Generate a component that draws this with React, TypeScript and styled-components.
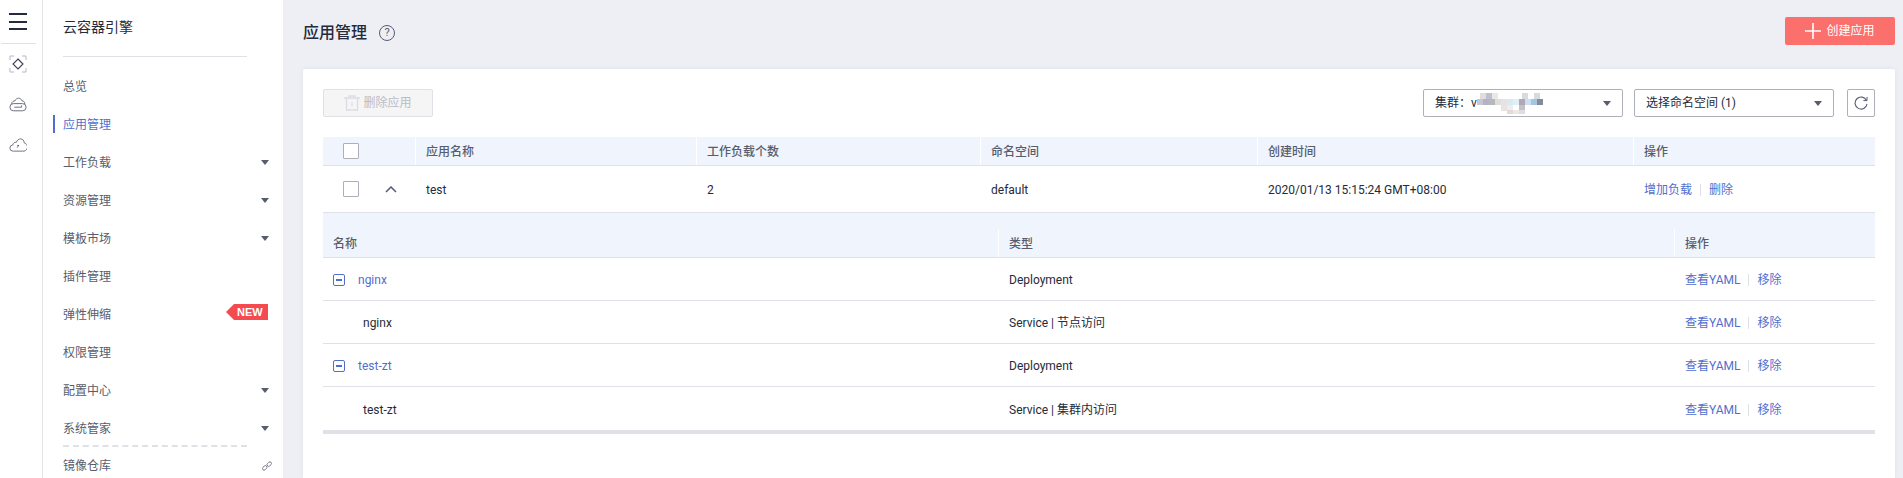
import React from 'react';
import styled, { createGlobalStyle } from 'styled-components';

const GlobalStyle = createGlobalStyle`
  html, body {
    margin: 0;
    height: 100%;
    overflow: hidden;
    background: #eeeff4;
  }
  #root {
    height: 100%;
  }
  * {
    box-sizing: border-box;
  }
`;

const navItems = [
  { label: '总览' },
  { label: '应用管理', active: true },
  { label: '工作负载', arrow: true },
  { label: '资源管理', arrow: true },
  { label: '模板市场', arrow: true },
  { label: '插件管理' },
  { label: '弹性伸缩', badge: true },
  { label: '权限管理' },
  { label: '配置中心', arrow: true },
  { label: '系统管家', arrow: true },
];

const workloads = [
  { name: 'nginx', type: 'Deployment', parent: true },
  { name: 'nginx', type: 'Service | 节点访问' },
  { name: 'test-zt', type: 'Deployment', parent: true },
  { name: 'test-zt', type: 'Service | 集群内访问' },
];

const mosaic: [number, number, number, number, string][] = [
  [5, 0, 6, 6, '#e0dce0'], [11, 0, 6, 6, '#bfbfd0'], [17, 0, 6, 6, '#e8e8e8'],
  [47, 0, 6, 6, '#d6dbe2'], [59, 0, 6, 6, '#d6dbe2'],
  [2, 6, 6, 6, '#c8c6d2'], [8, 6, 6, 6, '#b4b2c4'], [14, 6, 6, 6, '#b4babc'], [20, 6, 6, 6, '#dedede'],
  [26, 6, 6, 6, '#e8e2e2'], [32, 6, 6, 6, '#d8ebf4'], [38, 6, 6, 6, '#e0eef6'], [44, 6, 6, 6, '#aea8b8'],
  [50, 6, 6, 6, '#cbdff0'], [56, 6, 6, 6, '#a4c6e0'], [62, 6, 6, 6, '#868b9c'],
  [26, 12, 6, 6, '#e8e4e4'], [32, 12, 6, 6, '#ededed'], [44, 12, 6, 6, '#c4c0c8'],
  [32, 17, 6, 4, '#e2dad8'], [38, 17, 6, 4, '#ece8e8'], [44, 17, 6, 4, '#e0dce0'],
];

const App: React.FC = () => (
  <Page>
    <GlobalStyle />
    <Rail>
      <MenuBars>
        <span />
        <span />
        <span />
      </MenuBars>
      <RailDivider />
      <RailIcon>
        <svg width="18" height="18" viewBox="0 0 18 18" fill="none">
          <path d="M1 5V1h4M13 1h4v4M17 13v4h-4M5 17H1v-4" stroke="#b5b7c6" />
          <path d="M9 4l5 5-5 5-5-5z" stroke="#3b3f55" strokeWidth="1.1" />
        </svg>
      </RailIcon>
      <RailIcon>
        <svg width="18" height="15" viewBox="0 0 20 16" fill="none" stroke="#5f6274">
          <path d="M3 7.5C3 4.5 5.5 4 6.5 4 7.5 2 9 1 10.5 1c2 0 3.500 1.300 4 3 2 0 3 1.500 3 3.500" />
          <rect x="1" y="7" width="18" height="8" rx="4" />
          <path d="M6 11h8M14 9v2" />
        </svg>
      </RailIcon>
      <RailIcon>
        <svg width="18" height="14" viewBox="0 0 20 16" fill="none" stroke="#5f6274">
          <path d="M5 15H4.500a3.500 3.500 0 0 1-.5-7C4.500 5.500 6.500 4.500 8 5 9 2.500 11 1 13 1c2.500 0 4 2 4 4.500a4.700 4.700 0 0 1-2 9.500z" />
          <path d="M9 11l2-3M9 8.500h2" />
        </svg>
      </RailIcon>
    </Rail>

    <Sidebar>
      <ServiceTitle>云容器引擎</ServiceTitle>
      <SideDivider />
      <NavList>
        {navItems.map((item) => (
          <NavItem key={item.label} $active={item.active}>
            {item.label}
            {item.arrow && <NavArrow />}
            {item.badge && <NewBadge>NEW</NewBadge>}
          </NavItem>
        ))}
      </NavList>
      <DashedDivider />
      <RepoItem>
        镜像仓库
        <svg width="10" height="10" viewBox="0 0 10 10" fill="none" stroke="#6c6f80" strokeWidth="0.9">
          <rect x="0.200" y="5.300" width="5" height="3.200" rx="1.600" transform="rotate(-45 2.700 6.900)" />
          <rect x="4.800" y="1.500" width="5" height="3.200" rx="1.600" transform="rotate(-45 7.300 3.100)" />
        </svg>
      </RepoItem>
    </Sidebar>

    <Content>
      <TitleBar>
        <TitleGroup>
          <PageTitle>应用管理</PageTitle>
          <HelpIcon>?</HelpIcon>
        </TitleGroup>
        <CreateButton>
          <svg width="16" height="16" viewBox="0 0 16 16" stroke="#fff" strokeWidth="1.600">
            <path d="M8 0v16M0 8h16" />
          </svg>
          创建应用
        </CreateButton>
      </TitleBar>

      <Card>
        <Toolbar>
          <DeleteButton disabled>
            <svg width="16" height="16" viewBox="0 0 16 16" fill="none" stroke="#dcdde3" strokeWidth="1.300">
              <path d="M0 3h16M5 3V1h6v2M2.500 3v12h11V3M8 7v4" />
            </svg>
            删除应用
          </DeleteButton>
          <ToolbarRight>
            <SelectBox>
              <ClusterValue>
                集群：v
                <svg width="68" height="21" viewBox="0 0 68 21">
                  {mosaic.map(([x, y, w, h, fill]) => (
                    <rect key={`${x}-${y}`} x={x} y={y} width={w} height={h} fill={fill} />
                  ))}
                </svg>
              </ClusterValue>
              <SelectArrow />
            </SelectBox>
            <SelectBox>
              选择命名空间 (1)
              <SelectArrow />
            </SelectBox>
            <RefreshButton>
              <svg width="14" height="14" viewBox="0 0 14 14" fill="none" stroke="#555a70" strokeWidth="1.100">
                <path d="M12.500 4.500A6 6 0 1 0 13 8" />
                <path d="M13 1v3.600H9.400" strokeWidth="1" />
              </svg>
            </RefreshButton>
          </ToolbarRight>
        </Toolbar>

        <TableHead>
          <HeadCheckCell>
            <Checkbox />
          </HeadCheckCell>
          <HeadCell>应用名称</HeadCell>
          <HeadCell>工作负载个数</HeadCell>
          <HeadCell>命名空间</HeadCell>
          <HeadCell>创建时间</HeadCell>
          <HeadCell>操作</HeadCell>
        </TableHead>
        <AppRow>
          <ExpandCell>
            <Checkbox />
            <svg width="12" height="7" viewBox="0 0 12 7" fill="none" stroke="#555a70" strokeWidth="1.500">
              <path d="M1 6l5-5 5 5" />
            </svg>
          </ExpandCell>
          <Cell>test</Cell>
          <Cell>2</Cell>
          <Cell>default</Cell>
          <Cell>2020/01/13 15:15:24 GMT+08:00</Cell>
          <Cell>
            <LinkText>增加负载</LinkText>
            <LinkDivider />
            <LinkText>删除</LinkText>
          </Cell>
        </AppRow>

        <SubHead>
          <SubHeadCell>名称</SubHeadCell>
          <SubHeadCell>类型</SubHeadCell>
          <SubHeadCell>操作</SubHeadCell>
        </SubHead>
        {workloads.map((row, index) => (
          <SubRow key={index}>
            {row.parent ? (
              <NameCell>
                <CollapseBox />
                <LinkText>{row.name}</LinkText>
              </NameCell>
            ) : (
              <ChildName>{row.name}</ChildName>
            )}
            <Cell>{row.type}</Cell>
            <Cell>
              <LinkText>查看YAML</LinkText>
              <LinkDivider />
              <LinkText>移除</LinkText>
            </Cell>
          </SubRow>
        ))}
        <TableFoot />
      </Card>
    </Content>
  </Page>
);

export default App;

const Page = styled.div`
  display: flex;
  height: 478px;
  overflow: hidden;
  background: #eeeff4;
  color: #252b3a;
  font-family: Roboto, 'Noto Sans CJK SC', sans-serif;
  font-size: 12px;
  line-height: 16px;
`;

const Rail = styled.div`
  flex: 0 0 43px;
  background: #fff;
  border-right: 1px solid #e3e4e8;
`;

const MenuBars = styled.div`
  display: flex;
  flex-direction: column;
  justify-content: space-between;
  width: 18px;
  height: 17px;
  margin: 13px 0 13px 9px;

  span {
    height: 2px;
    background: #252b3a;
  }
`;

const RailDivider = styled.div`
  width: 35px;
  height: 1px;
  margin-left: 1px;
  background: #dfe1e6;
`;

const RailIcon = styled.div`
  display: flex;
  align-items: center;
  justify-content: center;
  width: 36px;
  height: 40.5px;
`;

const Sidebar = styled.aside`
  flex: 0 0 240px;
  padding-left: 20px;
  background: #fff;
`;

const ServiceTitle = styled.div`
  padding-top: 18px;
  height: 56px;
  font-size: 14px;
  line-height: 18px;
`;

const SideDivider = styled.div`
  width: 184px;
  height: 1px;
  margin-bottom: 10px;
  background: #dfe1e6;
`;

const NavList = styled.div`
  display: flex;
  flex-direction: column;
`;

const NavItem = styled.div<{ $active?: boolean }>`
  position: relative;
  display: flex;
  align-items: center;
  justify-content: space-between;
  height: 38px;
  padding: 2px 15px 0 0;
  color: ${(p) => (p.$active ? '#526ecc' : '#575d6c')};

  ${(p) =>
    p.$active &&
    `
    &::before {
      content: '';
      position: absolute;
      left: -10px;
      top: 10px;
      width: 2px;
      height: 18px;
      background: #526ecc;
    }
  `}
`;

const NavArrow = styled.i`
  width: 0;
  height: 0;
  margin: -2px -1px 0 0;
  border-left: 4px solid transparent;
  border-right: 4px solid transparent;
  border-top: 5px solid #575d6c;
`;

const NewBadge = styled.span`
  position: relative;
  display: block;
  width: 34px;
  height: 16px;
  margin-top: -6px;
  padding-left: 3px;
  background: #f54a4f;
  color: #fff;
  font-family: 'Liberation Sans', sans-serif;
  font-size: 11px;
  font-weight: 700;
  line-height: 16px;

  &::before {
    content: '';
    position: absolute;
    left: -8px;
    top: 0;
    border-top: 8px solid transparent;
    border-bottom: 8px solid transparent;
    border-right: 8px solid #f54a4f;
  }
`;

const DashedDivider = styled.div`
  width: 184px;
  border-top: 2px dashed #dfe1e6;
  transform: translateY(-2px);
`;

const RepoItem = styled.div`
  display: flex;
  align-items: center;
  justify-content: space-between;
  height: 34px;
  padding-right: 11px;
  color: #575d6c;
`;

const Content = styled.main`
  flex: 1;
  display: flex;
  flex-direction: column;
  min-width: 0;
  padding: 0 8px 0 20px;
`;

const TitleBar = styled.div`
  display: flex;
  align-items: flex-start;
  justify-content: space-between;
  height: 69px;
  padding-top: 17px;
`;

const TitleGroup = styled.div`
  display: flex;
  align-items: center;
  height: 32px;
`;

const PageTitle = styled.h1`
  margin: 0;
  color: #252b3a;
  font-size: 16px;
  font-weight: 500;
  line-height: 32px;
`;

const HelpIcon = styled.span`
  display: flex;
  align-items: center;
  justify-content: center;
  width: 16px;
  height: 16px;
  margin-left: 12px;
  border: 1px solid #575d6c;
  border-radius: 50%;
  color: #575d6c;
  font-size: 11px;
`;

const CreateButton = styled.button`
  display: flex;
  align-items: center;
  justify-content: center;
  gap: 5px;
  width: 110px;
  height: 28px;
  padding: 0;
  border: 0;
  border-radius: 2px;
  background: #fb6f6c;
  color: #fff;
  font: inherit;
`;

const Card = styled.section`
  flex: 1;
  padding: 20px 20px 0;
  border-radius: 2px 2px 0 0;
  background: #fff;
  box-shadow: 0 0 4px rgba(90, 90, 110, 0.08);
`;

const Toolbar = styled.div`
  display: flex;
  justify-content: space-between;
  height: 48px;
`;

const DeleteButton = styled.button`
  display: flex;
  align-items: center;
  justify-content: center;
  gap: 3px;
  width: 110px;
  height: 28px;
  padding: 0;
  border: 1px solid #dfe1e6;
  border-radius: 2px;
  background: #f5f5f6;
  color: #bbbbc5;
  font: inherit;
`;

const ToolbarRight = styled.div`
  display: flex;
`;

const SelectBox = styled.div`
  display: flex;
  align-items: center;
  justify-content: space-between;
  width: 200px;
  height: 28px;
  margin-right: 11px;
  padding: 0 11px;
  border: 1px solid #adb0b8;
  border-radius: 2px;
  background: #fff;
`;

const ClusterValue = styled.span`
  display: flex;
  align-items: center;

  svg {
    margin-left: -2px;
  }
`;

const SelectArrow = styled.i`
  width: 0;
  height: 0;
  border-left: 4px solid transparent;
  border-right: 4px solid transparent;
  border-top: 5px solid #575d6c;
`;

const RefreshButton = styled.button`
  display: flex;
  align-items: center;
  justify-content: center;
  width: 28px;
  height: 28px;
  margin-left: 2px;
  padding: 0;
  border: 1px solid #adb0b8;
  border-radius: 2px;
  background: #fff;
`;

const mainColumns = '92px 281px 284px 277px 376px 1fr';
const subColumns = '675px 676px 1fr';

const TableHead = styled.div`
  display: grid;
  grid-template-columns: ${mainColumns};
  height: 29px;
  background: #f0f4fc;
  border-bottom: 1px solid #dfe1e6;
`;

const HeadCell = styled.div`
  display: flex;
  align-items: center;
  padding: 2px 0 0 10px;
  border-left: 1px solid #fff;
  color: #575d6c;
  font-weight: 500;
`;

const HeadCheckCell = styled.div`
  display: flex;
  align-items: center;
  padding-left: 20px;
`;

const Checkbox = styled.span`
  display: block;
  flex: none;
  width: 16px;
  height: 16px;
  border: 1px solid #adb0b8;
  border-radius: 1px;
  background: #fff;
`;

const AppRow = styled.div`
  display: grid;
  grid-template-columns: ${mainColumns};
  height: 47px;
  border-bottom: 1px solid #dfe1e6;
`;

const ExpandCell = styled.div`
  display: flex;
  align-items: center;
  gap: 26px;
  padding-left: 20px;
`;

const Cell = styled.div`
  display: flex;
  align-items: center;
  padding: 2px 0 0 11px;
`;

const LinkText = styled.span`
  color: #526ecc;
`;

const LinkDivider = styled.span`
  width: 1px;
  height: 12px;
  margin: 0 8px;
  background: #dfe1e6;
`;

const SubHead = styled.div`
  display: grid;
  grid-template-columns: ${subColumns};
  height: 45px;
  padding-top: 16px;
  background: #f0f4fc;
  border-bottom: 1px solid #dfe1e6;
`;

const SubHeadCell = styled(HeadCell)`
  &:first-child {
    border-left: 0;
  }
`;

const SubRow = styled.div`
  display: grid;
  grid-template-columns: ${subColumns};
  height: 43px;
  border-bottom: 1px solid #dfe1e6;

  &:nth-last-child(2) {
    border-bottom: 0;
  }
`;

const NameCell = styled.div`
  display: flex;
  align-items: center;
  gap: 13px;
  padding: 2px 0 0 10px;
`;

const CollapseBox = styled.span`
  position: relative;
  display: block;
  width: 12px;
  height: 12px;
  border: 1px solid #526ecc;
  border-radius: 2px;

  &::after {
    content: '';
    position: absolute;
    left: 2px;
    top: 4px;
    width: 6px;
    height: 2px;
    background: #526ecc;
  }
`;

const ChildName = styled.div`
  display: flex;
  align-items: center;
  padding: 2px 0 0 40px;
`;

const TableFoot = styled.div`
  height: 4px;
  background: #dfe1e6;
`;
